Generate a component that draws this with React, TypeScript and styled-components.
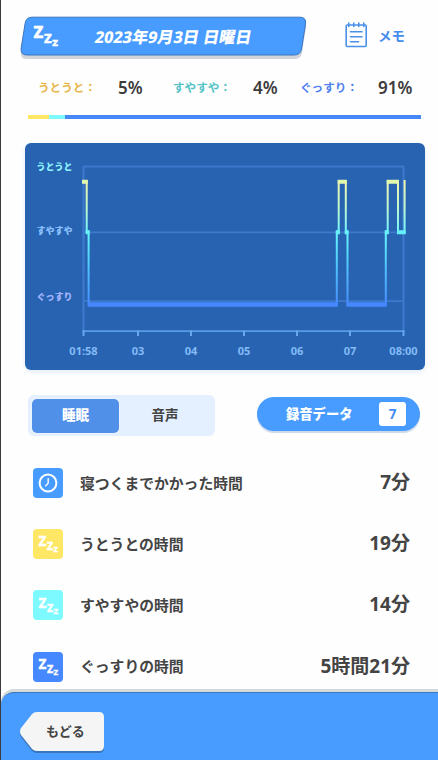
import React from "react";
import styled, { createGlobalStyle } from "styled-components";

const GlobalStyle = createGlobalStyle`
  * { box-sizing: border-box; }
  body { margin: 0; background: #fefefe; }
`;

const Screen = styled.div`
  width: 438px;
  height: 760px;
  overflow: hidden;
  display: flex;
  flex-direction: column;
  background: #fefefe;
  border-left: 1px solid #3b3b3f;
  font-family: "Noto Sans", "Noto Sans CJK JP", sans-serif;
  font-weight: 700;
  color: #444;
  white-space: nowrap;
`;

const Header = styled.header`
  height: 62px;
  padding: 16px 0 0 19px;
  display: flex;
  align-items: flex-start;
`;

const DateBanner = styled.div`
  width: 287px;
  height: 44px;
  display: grid;
  & > * { grid-area: 1 / 1; }
`;

const BannerContent = styled.div`
  display: flex;
  align-items: flex-start;
  padding: 8px 0 0 13px;
`;

const DateText = styled.h1`
  margin: 0 0 0 36px;
  font-size: 16.1px;
  line-height: 26px;
  font-weight: 800;
  color: #fff;
  transform: skewX(-10deg);
`;

const MemoButton = styled.div`
  display: flex;
  align-items: center;
  gap: 10px;
  margin: 5px 0 0 38px;
  height: 27px;
  font-size: 13.5px;
  color: #438cf0;
`;

const Stats = styled.section`
  height: 53px;
  padding-left: 37px;
  display: grid;
  grid-template-columns: 135px 127px 1fr;
`;

const Stat = styled.div`
  display: flex;
  align-items: center;
  height: 50px;
`;

const StatLabel = styled.span<{ $color: string; $width: number }>`
  width: ${(p) => p.$width}px;
  font-size: 11.6px;
  color: ${(p) => p.$color};
`;

const StatValue = styled.span`
  font-size: 17px;
  font-weight: 600;
  color: #3c3c3c;
`;

const RatioBar = styled.div`
  display: flex;
  flex: none;
  width: 393px;
  height: 4px;
  margin-left: 27px;
`;

const RatioPart = styled.div<{ $color: string; $width?: number }>`
  ${(p) => (p.$width ? `width: ${p.$width}px;` : "flex: 1;")}
  background: ${(p) => p.$color};
`;

const ChartPanel = styled.section`
  flex: none;
  width: 400px;
  height: 227px;
  margin: 24px 0 0 24px;
  border-radius: 6px;
  background: #2863b2;
  box-shadow: 0 2px 5px #e3ebf8;
  svg { display: block; }
`;

const Controls = styled.div`
  flex: none;
  display: flex;
  align-items: flex-start;
  height: 41px;
  margin: 25px 0 0 27px;
`;

const Tabs = styled.div`
  width: 187px;
  height: 41px;
  display: flex;
  padding: 4px;
  border-radius: 6px;
  background: #e4f0ff;
`;

const Tab = styled.div<{ $active?: boolean }>`
  width: ${(p) => (p.$active ? 88 : 93)}px;
  height: 34px;
  line-height: 32px;
  border-radius: 5px;
  text-align: center;
  font-size: 13.5px;
  font-weight: ${(p) => (p.$active ? 900 : 700)};
  color: ${(p) => (p.$active ? "#fff" : "#444")};
  background: ${(p) => (p.$active ? "#5090e9" : "transparent")};
  box-shadow: ${(p) => (p.$active ? "0 0 2px #fff" : "none")};
`;

const RecordButton = styled.div`
  width: 163px;
  height: 34px;
  margin: 2px 0 0 42px;
  padding: 0 14px 0 29px;
  display: flex;
  align-items: center;
  justify-content: space-between;
  border-radius: 17px;
  background: #489cff;
  box-shadow: 0 2px 1px #cbd9ea;
  color: #fff;
  font-size: 13.3px;
  line-height: 32px;
  font-weight: 900;
`;

const CountBadge = styled.span`
  width: 27px;
  height: 24px;
  line-height: 24px;
  border-radius: 3px;
  background: #fff;
  color: #438cf0;
  text-align: center;
  font-size: 13.5px;
  font-weight: 700;
`;

const Rows = styled.main`
  flex: none;
  height: 256px;
  padding: 17px 28px 0 32px;
`;

const Row = styled.div`
  height: 61.2px;
  padding-bottom: 1.2px;
  display: flex;
  align-items: center;
`;

const IconTile = styled.div<{ $color: string }>`
  width: 30px;
  height: 30px;
  border-radius: 4px;
  display: grid;
  place-items: center;
  background: ${(p) => p.$color};
`;

const RowLabel = styled.span`
  flex: 1;
  padding: 0 0 2px 17px;
  font-size: 14.8px;
  font-weight: 600;
`;

const RowValue = styled.span`
  padding-bottom: 4px;
  font-size: 19px;
`;

const FooterBack = styled.div`
  flex: none;
  height: 68px;
  margin-left: -1px;
  background: linear-gradient(#fefefe 12px, #10294c 13px);
`;

const Footer = styled.footer`
  height: 68px;
  margin-left: 1px;
  padding: 19px 0 0 18px;
  border-top: 1px solid #3d78bd;
  border-top-left-radius: 13px;
  background: #489cff;
  box-shadow: 0 -3px 0 #d4d9dc;
`;

const BackButton = styled.div`
  width: 86px;
  height: 43px;
  display: grid;
  & > * { grid-area: 1 / 1; }
`;

const BackText = styled.span`
  padding-left: 27px;
  line-height: 38px;
  font-size: 13px;
`;

const ZzzDrawing = styled.svg`
  flex: none;
  overflow: visible;
`;

function Zzz({ width, height }: { width: number; height: number }) {
  return (
    <ZzzDrawing width={width} height={height} viewBox="0 0 26 24" fill="#fff" stroke="#fff" strokeWidth="0.4" fontFamily="Noto Sans" fontWeight="800">
      <text x="0.6" y="14.4" fontSize="16.5">Z</text>
      <text x="11" y="19.2" fontSize="13">Z</text>
      <text x="19.2" y="21.8" fontSize="9.6">Z</text>
    </ZzzDrawing>
  );
}

function ClockIcon() {
  return (
    <svg width="20" height="20" viewBox="0 0 20 20" fill="none" stroke="#fff" strokeLinecap="round">
      <circle cx="10" cy="10" r="8.4" strokeWidth="2" />
      <path d="M10.2 5.6V10.1L7.8 12.8" strokeWidth="1.4" />
    </svg>
  );
}

function MemoIcon() {
  return (
    <svg width="23" height="26" viewBox="0 0 23 26" fill="none" stroke="#4a91ea" strokeWidth="1.6" strokeLinecap="round">
      <rect x="1.2" y="3" width="20" height="21.5" rx="1" />
      <path d="M3.8 1V4.5M8.8 1V4.5M13.8 1V4.5M18.8 1V4.5M5.5 9.8H17M5.5 14.8H17M5.5 19.8H13.5" />
    </svg>
  );
}

const levels = [
  { label: "うとうと", y: 27, color: "#8ff5ff" },
  { label: "すやすや", y: 91, color: "#8cc1ff" },
  { label: "ぐっすり", y: 157, color: "#a3b5ff" },
];

const ticks = [
  { x: 58.5, label: "01:58" },
  { x: 113, label: "03" },
  { x: 166, label: "04" },
  { x: 219, label: "05" },
  { x: 272, label: "06" },
  { x: 325, label: "07" },
  { x: 378.5, label: "08:00" },
];

function SleepChart() {
  return (
    <svg width="400" height="227" viewBox="0 0 400 227" fontWeight="700">
      <defs>
        <linearGradient id="depth" gradientUnits="userSpaceOnUse" x1="0" y1="37" x2="0" y2="164">
          <stop offset="0" stopColor="#f3f7ad" />
          <stop offset="0.22" stopColor="#bff6cf" />
          <stop offset="0.43" stopColor="#66f3ff" />
          <stop offset="0.6" stopColor="#54d5fa" />
          <stop offset="1" stopColor="#4688ff" />
        </linearGradient>
      </defs>
      <g fill="none" stroke="#3d78cb" strokeWidth="1.8">
        <path d="M58 23.5H379M58 89.3H379M58 158.2H379" />
        <path d="M58.5 23V188M378.5 23V188" strokeWidth="2.2" />
      </g>
      <path d="M57.5 188.2H379.5" stroke="#589be6" strokeWidth="1.8" />
      {ticks.map((t) => (
        <path key={t.label} d={`M${t.x} 187.5V193`} stroke="#66a7ed" strokeWidth="2" />
      ))}
      <path
        d="M61.7 37V90M63.6 87.5V162M311.8 162V87.5M313.7 91V37M320.8 37V91M322.5 87.5V162M360.8 162V87.5M362.7 91V37M373 37V91M379.6 91V37"
        fill="none"
        stroke="url(#depth)"
        strokeWidth="2"
      />
      <path d="M57 38.7H62.7M312.7 38.7H321.8M361.7 38.7H374" stroke="#e4f8ad" strokeWidth="4" />
      <path d="M60.7 89.2H64.6M310.8 89.2H314.7M319.8 89.2H323.5M359.8 89.2H363.7M372 89.2H380.6" stroke="#66f0fa" strokeWidth="4" />
      <path d="M62.7 161.5H312.8M321.5 161.5H361.8" stroke="#4688ff" strokeWidth="4.4" />
      {levels.map((l) => (
        <text key={l.label} x="11.5" y={l.y} fontSize="9" fill={l.color} fontWeight="900">{l.label}</text>
      ))}
      {ticks.map((t) => (
        <text key={t.label} x={t.x} y="212.2" fontSize="11" fill="#83bbf6" textAnchor="middle">{t.label}</text>
      ))}
    </svg>
  );
}

const stats = [
  { label: "うとうと：", value: "5%", color: "#e9b64a", width: 80 },
  { label: "すやすや：", value: "4%", color: "#55c3c7", width: 80 },
  { label: "ぐっすり：", value: "91%", color: "#4f7ff0", width: 78 },
];

const rows = [
  { label: "寝つくまでかかった時間", value: "7分", color: "#489cff", clock: true },
  { label: "うとうとの時間", value: "19分", color: "#ffe766" },
  { label: "すやすやの時間", value: "14分", color: "#7dfaff" },
  { label: "ぐっすりの時間", value: "5時間21分", color: "#4688ff" },
];

export default function App() {
  return (
    <>
      <GlobalStyle />
      <Screen>
        <Header>
          <DateBanner>
            <svg width="287" height="44" viewBox="0 0 287 44">
              <path d="M12 5H280Q287 5 286 12L282 37Q281 43 274 43H7Q0 43 1 36L5 11Q6 5 12 5Z" fill="#d0d5dc" />
              <path d="M12 1.2H280Q286.5 1.2 285.5 8L281.5 33Q280.5 39 274 39H7Q0.2 39 1.2 32L5.2 7Q6.2 1.2 12 1.2Z" fill="#489cff" stroke="#3976c2" />
            </svg>
            <BannerContent>
              <Zzz width={26} height={24} />
              <DateText>2023年9月3日 日曜日</DateText>
            </BannerContent>
          </DateBanner>
          <MemoButton><MemoIcon />メモ</MemoButton>
        </Header>
        <Stats>
          {stats.map((s) => (
            <Stat key={s.label}>
              <StatLabel $color={s.color} $width={s.width}>{s.label}</StatLabel>
              <StatValue>{s.value}</StatValue>
            </Stat>
          ))}
        </Stats>
        <RatioBar>
          <RatioPart $color="#ffe766" $width={21} />
          <RatioPart $color="#7dfaff" $width={16} />
          <RatioPart $color="#4688f8" />
        </RatioBar>
        <ChartPanel><SleepChart /></ChartPanel>
        <Controls>
          <Tabs><Tab $active>睡眠</Tab><Tab>音声</Tab></Tabs>
          <RecordButton>録音データ<CountBadge>7</CountBadge></RecordButton>
        </Controls>
        <Rows>
          {rows.map((r) => (
            <Row key={r.label}>
              <IconTile $color={r.color}>{r.clock ? <ClockIcon /> : <Zzz width={21} height={19.4} />}</IconTile>
              <RowLabel>{r.label}</RowLabel>
              <RowValue>{r.value}</RowValue>
            </Row>
          ))}
        </Rows>
        <FooterBack>
          <Footer>
            <BackButton>
              <svg width="86" height="43" viewBox="0 0 86 43">
                <path d="M18 2H80Q85 2 85 7V36Q85 41 80 41H18Q14 41 11.5 37L2 25Q0 21.5 2 18L11.5 6Q14 2 18 2Z" fill="#3976bd" />
                <path d="M18 0H80Q85 0 85 5V34Q85 39 80 39H18Q14 39 11.5 35L2 23Q0 19.5 2 16L11.5 4Q14 0 18 0Z" fill="#f5f5f5" />
              </svg>
              <BackText>もどる</BackText>
            </BackButton>
          </Footer>
        </FooterBack>
      </Screen>
    </>
  );
}
